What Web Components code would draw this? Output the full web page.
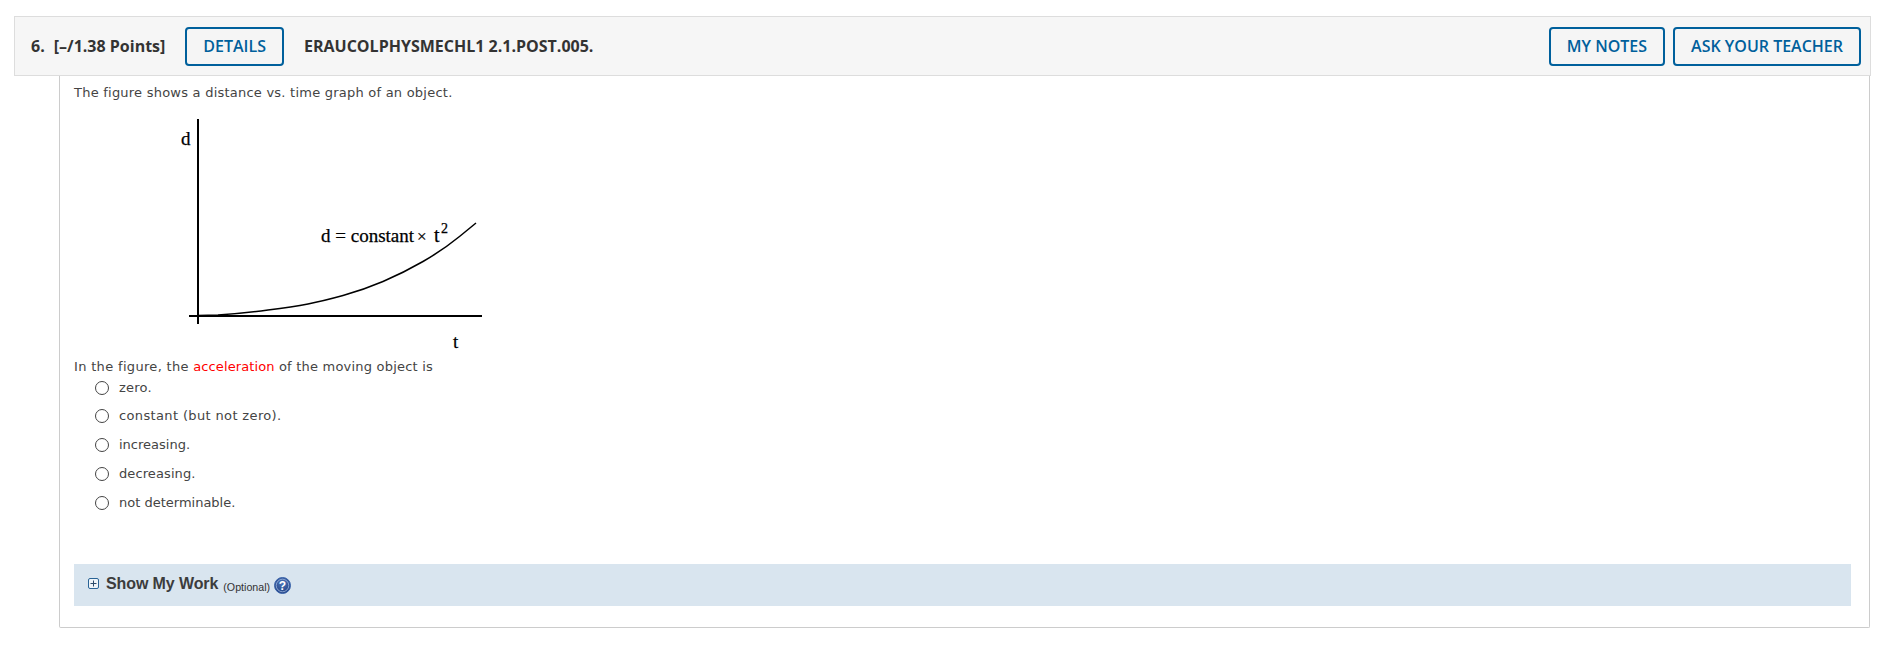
<!DOCTYPE html>
<html lang="en"><head><meta charset="utf-8"><title>Question 6</title>
<style>
html,body{margin:0;background:#fff}
body{padding:16px 13px 0 14px;font-family:"DejaVu Sans",sans-serif;color:#333}
</style></head><body>
<question-card>
  <question-header slot="header" number="6." points="[–/1.38 Points]" code="ERAUCOLPHYSMECHL1 2.1.POST.005."></question-header>
  <question-text style="letter-spacing:.23px">The figure shows a distance vs. time graph of an object.</question-text>
  <graph-figure></graph-figure>
  <question-text><span style="letter-spacing:.33px">In the figure, the</span> <span style="color:#f00;letter-spacing:.1px">acceleration</span> of the moving object is</question-text>
  <radio-list>
    <radio-option style="height:23px;margin-bottom:2px">zero.</radio-option>
    <radio-option style="letter-spacing:.36px">constant (but not zero).</radio-option>
    <radio-option style="letter-spacing:0">increasing.</radio-option>
    <radio-option style="letter-spacing:.1px">decreasing.</radio-option>
    <radio-option style="letter-spacing:0">not determinable.</radio-option>
  </radio-list>
  <work-bar></work-bar>
</question-card>
<script>
function def(name, html){
  customElements.define(name, class extends HTMLElement{
    connectedCallback(){
      if(this.shadowRoot) return;
      const r=this.attachShadow({mode:'open'});
      r.innerHTML=typeof html==='function'?html(this):html;
    }
  });
}
def('question-card',`<style>
:host{display:block}
.body{margin-left:45px;width:1811px;box-sizing:border-box;height:552px;border:1px solid #ccc;border-top:0;border-radius:0 0 2px 2px;padding:8px 18px 0 14px}
</style><slot name="header"></slot><div class="body"><slot></slot></div>`);
def('action-button',`<style>
:host{display:inline-flex;box-sizing:border-box;height:39px;align-items:center;padding:0 16px;border:2px solid #00609c;border-radius:4px;color:#00609c;font:600 16px "Open Sans",sans-serif;white-space:nowrap;background:#f5f5f5}
</style><slot></slot>`);
def('question-header',h=>`<style>
:host{display:flex;box-sizing:border-box;width:1857px;height:60px;align-items:center;background:#f6f6f6;border:1px solid #ddd;padding:0 9px 0 16px;font:700 16px "Open Sans",sans-serif;color:#333}
.num{margin-right:9px}
.pts{margin-right:20px}
.code{margin-left:20px}
.right{margin-left:auto;display:flex;gap:8px}
</style>
<span class="num">${h.getAttribute('number')}</span><span class="pts">${h.getAttribute('points')}</span>
<action-button>DETAILS</action-button><span class="code">${h.getAttribute('code')}</span>
<span class="right"><action-button>MY NOTES</action-button><action-button>ASK YOUR TEACHER</action-button></span>`);
def('question-text',`<style>
:host{display:block;font:13px/18px "DejaVu Sans",sans-serif;letter-spacing:.21px;color:#444}
</style><slot></slot>`);
def('graph-figure',`<style>
:host{display:block;height:256px}
svg{display:block}
text{font-family:"Liberation Serif",serif;fill:#000;stroke:#000;stroke-width:.25px}
</style>
<svg width="420" height="256" viewBox="74 102 420 256" xmlns="http://www.w3.org/2000/svg">
<path d="M198 119V324M189 316H482" stroke="#000" stroke-width="2" fill="none"/>
<path d="M198 315.5L218 315Q243 313.5 268 310Q293 307 308 304Q323 301 343 295.5Q363 290 383 281.5Q403 273 423 261.5Q443 250 459.5 236.5L476 223" stroke="#000" stroke-width="1.5" fill="none"/>
<text x="181" y="145" font-size="19">d</text>
<text x="321" y="242" font-size="19">d = constant</text>
<text x="417" y="242" font-size="17">×</text>
<text x="434" y="242" font-size="20">t</text>
<text x="441" y="233" font-size="14">2</text>
<text x="453" y="348" font-size="19">t</text>
</svg>`);
def('radio-list',`<style>:host{display:block}</style><slot></slot>`);
def('radio-option',`<style>
:host{display:flex;align-items:center;height:29px;padding-left:21px;font:13px/18px "DejaVu Sans",sans-serif;letter-spacing:.21px;color:#444}
i{display:block;box-sizing:border-box;width:14px;height:14px;border:1.8px solid #444;border-radius:50%;background:#fff;margin-right:10px}
</style><i></i><slot></slot>`);
def('work-bar',`<style>
:host{display:flex;align-items:center;box-sizing:border-box;height:42px;margin-top:47px;background:#d9e5ef;padding-left:14px;font:700 16px "Liberation Sans",sans-serif;color:#3c3c3c}
svg{display:block}
.plus{margin-bottom:3px}
.t{margin-left:7px;letter-spacing:-.1px;position:relative;top:-1px}
small{font:400 10.67px "Liberation Sans",sans-serif;color:#333;margin-left:5px;position:relative;top:2px}
.help{margin-left:4px;margin-top:1px}
</style>
<svg class="plus" width="11" height="11" viewBox="0 0 11 11"><rect x=".5" y=".5" width="10" height="10" rx="1.5" fill="#eef4f9" stroke="#2a6496"/><path d="M2.5 5.5h6M5.5 2.5v6" stroke="#2a4a6a"/></svg>
<span class="t">Show My Work</span><small>(Optional)</small>
<svg class="help" width="17" height="17" viewBox="0 0 17 17"><defs><radialGradient id="g" cx=".5" cy=".35" r=".7"><stop offset="0" stop-color="#4f78bb"/><stop offset="1" stop-color="#1c3a7c"/></radialGradient></defs><circle cx="8.5" cy="8.5" r="8" fill="url(#g)" stroke="#3a64ab"/><circle cx="8.5" cy="8.5" r="6.3" fill="none" stroke="#9db8e0" stroke-width=".8"/><text x="8.5" y="12.8" text-anchor="middle" font-family="Liberation Sans" font-weight="700" font-size="12" fill="#fff">?</text></svg>`);
</script>
</body></html>
